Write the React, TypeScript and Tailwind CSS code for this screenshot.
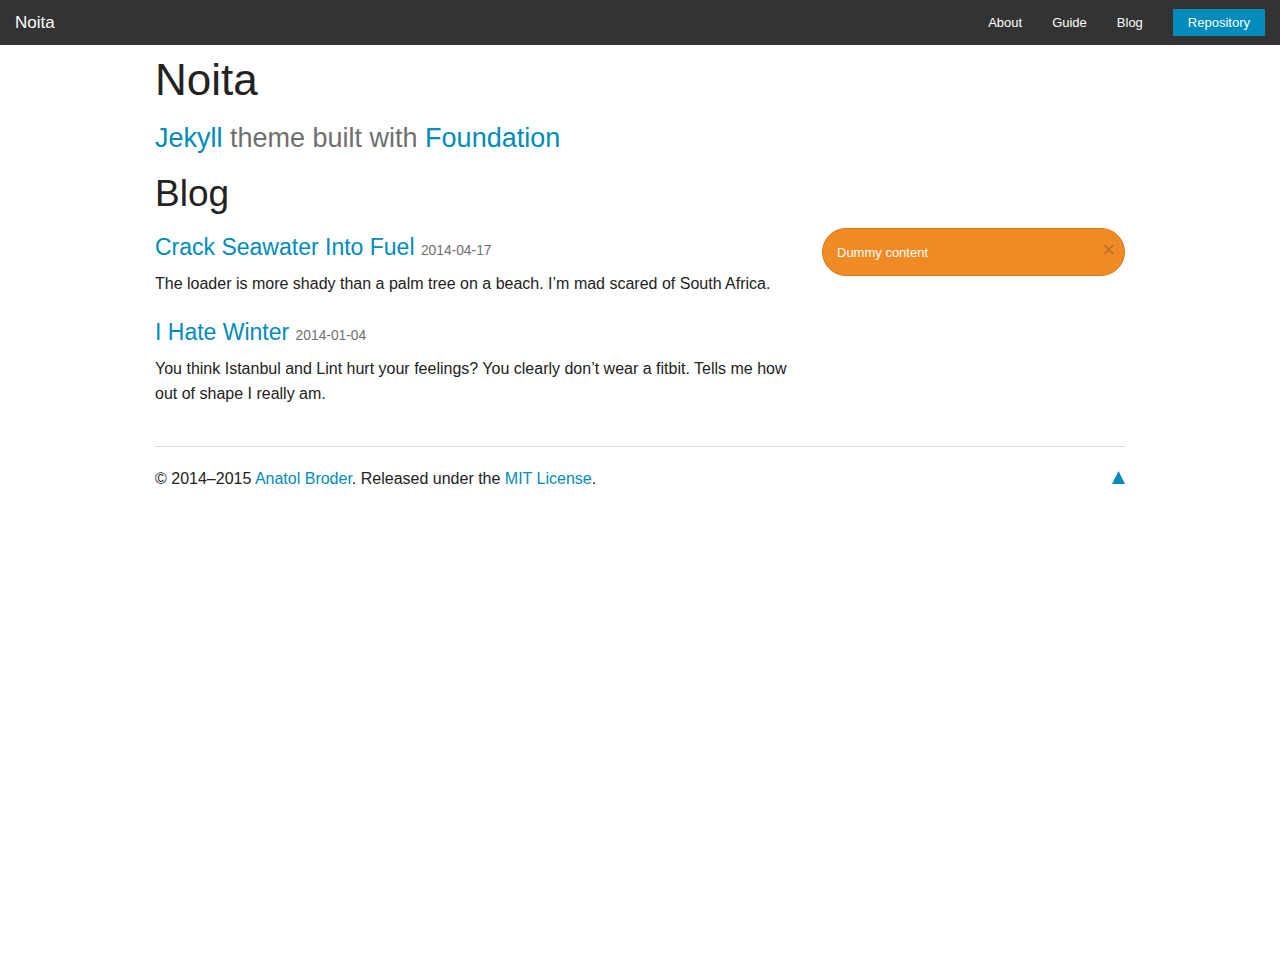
import React from "react";

const font = { fontFamily: '"Liberation Sans", Arial, Helvetica, sans-serif' };

export default function App() {
  return (
    <div className="min-h-[960px] bg-white text-[#222]" style={font}>
      <nav className="h-[45px] bg-[#333] flex items-center justify-between">
        <a className="pl-[15px] text-[17px] leading-[45px] text-white">Noita</a>
        <ul className="flex items-center">
          <li><a className="block px-[15px] text-[13px] leading-[45px] text-white">About</a></li>
          <li><a className="block px-[15px] text-[13px] leading-[45px] text-white">Guide</a></li>
          <li><a className="block px-[15px] text-[13px] leading-[45px] text-white">Blog</a></li>
          <li className="px-[15px] flex items-center h-[45px]">
            <a className="flex items-center h-[27px] px-[15px] bg-[#008cba] text-[13px] text-white">Repository</a>
          </li>
        </ul>
      </nav>
      <main className="w-[970px] mx-auto">
        <h1 className="mt-[4px] mb-2 text-[44px] leading-[1.4] text-[#222]">Noita</h1>
        <h3 className="mt-[9px] mb-[11px] text-[27px] leading-[1.4] text-[#6f6f6f]">
          <a className="text-[#008cba]">Jekyll</a> theme built with <a className="text-[#008cba]">Foundation</a>
        </h3>
        <h2 className="mt-[3px] mb-2 text-[37px] leading-[1.4] text-[#222]">Blog</h2>
        <div className="flex gap-[30px]">
          <div className="w-[637px]">
            <h4 className="mt-[3px] mb-2 text-[23px] leading-[1.4]">
              <a className="text-[#008cba]">Crack Seawater Into Fuel</a>{" "}
              <small className="text-[13.8px] text-[#6f6f6f]">2014-04-17</small>
            </h4>
            <p className="text-[16px] leading-[1.6] mb-[19px]">
              The loader is more shady than a palm tree on a beach. I’m mad scared of South Africa.
            </p>
            <h4 className="mt-[3px] mb-2 text-[23px] leading-[1.4]">
              <a className="text-[#008cba]">I Hate Winter</a>{" "}
              <small className="text-[13.8px] text-[#6f6f6f]">2014-01-04</small>
            </h4>
            <p className="text-[16px] leading-[25px] mb-5">
              You think Istanbul and Lint hurt your feelings? You clearly don’t wear a fitbit. Tells me how out of shape I really am.
            </p>
          </div>
          <div className="w-[303px]">
            <div className="relative h-[48px] flex items-center rounded-full bg-[#f08a24] border border-[#de770f] pl-[14px] pr-6 pt-[2px] text-[13px] text-white">
              Dummy content
              <span className="absolute right-[9px] top-[11px] text-[22px] leading-[0.9] text-[#333] opacity-30">×</span>
            </div>
          </div>
        </div>
        <hr className="border-0 border-t border-[#ddd] mt-[20px] mb-[19px]" />
        <div className="flex justify-between items-start">
          <p className="text-[16px] leading-[1.6]">
            © 2014–2015 <a className="text-[#008cba]">Anatol Broder</a>. Released under the <a className="text-[#008cba]">MIT License</a>.
          </p>
          <a className="mt-[5px] text-[#008cba]" aria-label="Back to top">
            <svg width="13" height="13" viewBox="0 0 13 13" className="block">
              <polygon points="6.5,0 13,13 0,13" fill="#008cba" />
            </svg>
          </a>
        </div>
      </main>
    </div>
  );
}
